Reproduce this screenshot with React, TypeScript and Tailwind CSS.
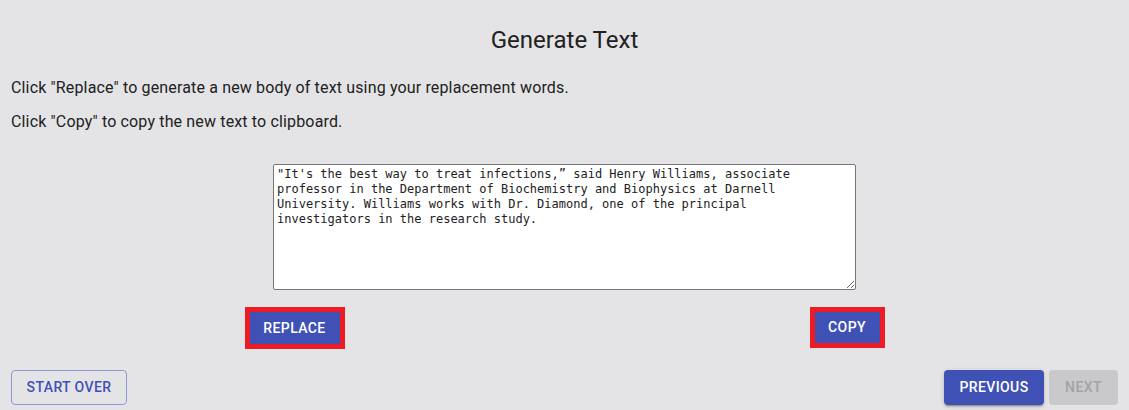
import { useState } from 'react';

const SAMPLE_TEXT = [
  '"It\'s the best way to treat infections,\u201d said Henry Williams, associate',
  'professor in the Department of Biochemistry and Biophysics at Darnell',
  'University. Williams works with Dr. Diamond, one of the principal',
  'investigators in the research study.',
].join('\n');

const containedBtn =
  'flex items-center justify-center rounded-[4px] bg-[#3f51b5] text-[14px] font-medium uppercase tracking-[0.4px] text-white';

export default function App() {
  const [text, setText] = useState(SAMPLE_TEXT);

  return (
    <div className="flex h-[410px] w-full flex-col bg-[#e4e4e6] font-['Roboto',sans-serif] text-[#212121]">
      <h1 className="mt-[24px] text-center text-[24px] leading-[32px] font-normal">
        Generate Text
      </h1>

      <p className="mt-[20px] px-[11px] text-[16px] leading-[24px] tracking-[0.15px]">
        Click "Replace" to generate a new body of text using your replacement words.
      </p>
      <p className="mt-[10px] px-[11px] text-[16px] leading-[24px] tracking-[0.15px]">
        Click "Copy" to copy the new text to clipboard.
      </p>

      <div className="mt-[30px] flex justify-center">
        <textarea
          value={text}
          onChange={(e) => setText(e.target.value)}
          className="h-[126px] w-[583px] rounded-[2px] border border-[#767676] bg-white px-[3px] py-[2px] font-['DejaVu_Sans_Mono',monospace] text-[12px] leading-[15px] text-[#222] outline-none"
        />
      </div>

      <div className="mt-[17px] flex justify-center">
        <div className="flex w-[640px] items-start justify-between">
          <div className="border-[5px] border-[#ed1c24]">
            <button className={`${containedBtn} h-[32px] w-[90px] rounded-none`}>
              Replace
            </button>
          </div>
          <div className="border-[5px] border-[#ed1c24]">
            <button className={`${containedBtn} h-[31px] w-[65px] rounded-none`}>
              Copy
            </button>
          </div>
        </div>
      </div>

      <div className="mt-auto mb-[5px] flex items-center justify-between px-[11px]">
        <button className="flex h-[35px] w-[116px] items-center justify-center rounded-[4px] border border-[#8d97d6] text-[14px] font-medium uppercase tracking-[0.4px] text-[#3f51b5]">
          Start Over
        </button>
        <div className="flex gap-[5px]">
          <button
            className={`${containedBtn} h-[35px] w-[100px] shadow-[0px_3px_1px_-2px_rgba(0,0,0,0.2),0px_2px_2px_0px_rgba(0,0,0,0.14),0px_1px_5px_0px_rgba(0,0,0,0.12)]`}
          >
            Previous
          </button>
          <button
            disabled
            className="flex h-[35px] w-[69px] items-center justify-center rounded-[4px] bg-[#c9c9cb] text-[14px] font-medium uppercase tracking-[0.4px] text-[#a3a3a5]"
          >
            Next
          </button>
        </div>
      </div>
    </div>
  );
}
